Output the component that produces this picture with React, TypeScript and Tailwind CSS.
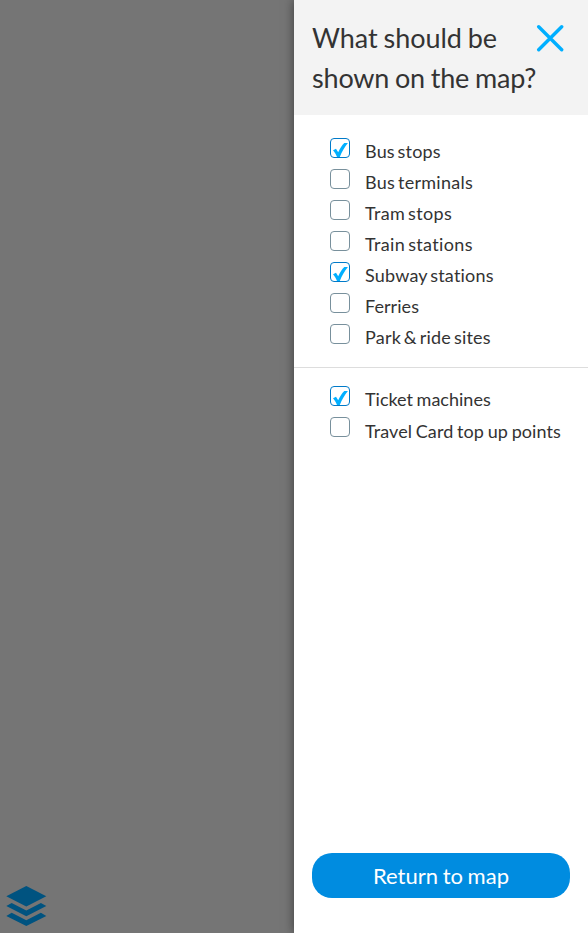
type Option = { label: string; checked: boolean; spacing: string };

const stops: Option[] = [
  { label: 'Bus stops', checked: true, spacing: 'tracking-[0.18px]' },
  { label: 'Bus terminals', checked: false, spacing: 'tracking-[0.27px]' },
  { label: 'Tram stops', checked: false, spacing: 'tracking-[0.34px]' },
  { label: 'Train stations', checked: false, spacing: 'tracking-[0.36px]' },
  { label: 'Subway stations', checked: true, spacing: 'tracking-[0.2px]' },
  { label: 'Ferries', checked: false, spacing: 'tracking-[0.05px]' },
  { label: 'Park & ride sites', checked: false, spacing: 'tracking-[0.22px]' },
];

const services: Option[] = [
  { label: 'Ticket machines', checked: true, spacing: 'tracking-[0px] [word-spacing:-1px]' },
  { label: 'Travel Card top up points', checked: false, spacing: 'tracking-[0.08px] pt-px [word-spacing:-1px]' },
];

function OptionRow({ label, checked, spacing }: Option) {
  return (
    <li className="flex h-[31px] items-start whitespace-nowrap [word-spacing:-2px]">
      <span
        role="checkbox"
        aria-checked={checked}
        aria-label={label}
        className={`block h-5 w-5 shrink-0 rounded-[4px] border ${checked ? 'border-[#007ac9]' : 'border-[#78909c]'}`}
      >
        {checked && (
          <svg viewBox="0 0 18 18" className="block h-[18px] w-[18px]" fill="#00afff">
            <path d="M2 11.2 L5 9.7 L7.2 13.2 C9 9.4 11 6.3 13.3 4 L16.9 3.9 C13.5 8 10.7 12.9 8.8 18 L6 18 C4.9 15.3 3.6 13 2 11.2Z" />
          </svg>
        )}
      </span>
      <span className={`ml-[15px] text-[18px] leading-[27px] [font-variant-ligatures:none] ${spacing}`}>
        {label}
      </span>
    </li>
  );
}

export default function App() {
  return (
    <div className="flex h-[933px] w-[588px] overflow-hidden bg-[#757575] font-['Lato',sans-serif] text-[#333]">
      <div className="flex w-[294px] items-end pb-[6px] pl-[6px]">
        <svg width="41" height="42" viewBox="0 0 41 42" fill="#005380">
          <path d="M20.3 1 L40.3 11.2 L20.3 21.4 L0.3 11.2Z" />
          <path d="M0.3 21.1 L5.7 18 L20.3 25.4 L34.9 18 L40.3 21.1 L20.3 31.3Z" />
          <path d="M0.3 30.9 L5.7 27.8 L20.3 35.2 L34.9 27.8 L40.3 30.9 L20.3 41.1Z" />
        </svg>
      </div>
      <aside className="flex w-[294px] flex-col bg-white shadow-[0_0_10px_rgba(0,0,0,0.5)]">
        <header className="flex h-[115px] shrink-0 justify-between bg-[#f3f3f3] pt-[18px] pr-6 pl-[18px]">
          <h1 className="w-0 text-[27px] leading-10 whitespace-nowrap [word-spacing:-1px]">
            <span className="block tracking-[-0.04px]">What should be</span>
            <span className="block tracking-[-0.18px]">shown on the map?</span>
          </h1>
          <button aria-label="Close" className="mt-[6px] h-7 w-7">
            <svg width="28" height="28" viewBox="0 0 28 28" stroke="#00afff" strokeWidth="3.4" strokeLinecap="round">
              <path d="M2.7 2.7 L25.7 25.7 M25.7 2.7 L2.7 25.7" />
            </svg>
          </button>
        </header>
        <ul className="h-[253px] border-b border-[#ddd] pt-[23px] pl-9">
          {stops.map((option) => (
            <OptionRow key={option.label} {...option} />
          ))}
        </ul>
        <ul className="pt-[18px] pl-9">
          {services.map((option) => (
            <OptionRow key={option.label} {...option} />
          ))}
        </ul>
        <button className="mx-[18px] mt-auto mb-[35px] h-[45px] rounded-[20px] bg-[#008ce0] text-[22px] leading-[45px] text-white [word-spacing:-1px]">
          Return to map
        </button>
      </aside>
    </div>
  );
}
